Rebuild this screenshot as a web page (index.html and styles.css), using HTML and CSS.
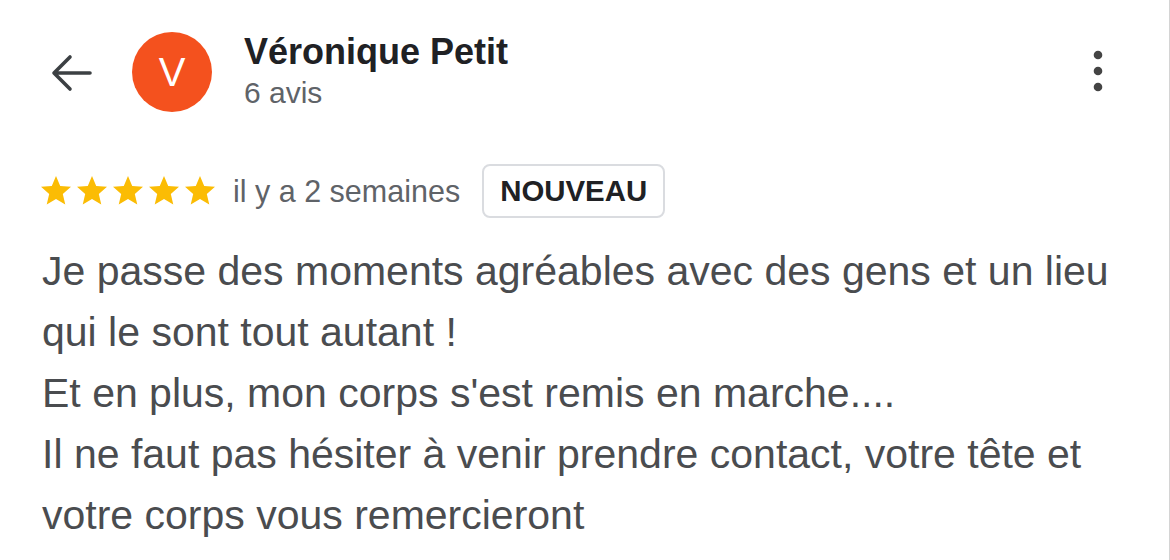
FILE: index.html
```html
<!DOCTYPE html>
<html lang="fr">
<head>
<meta charset="utf-8">
<link rel="stylesheet" href="styles.css">
</head>
<body>
<div class="page">
  <header class="header">
    <svg class="back" viewBox="0 0 42 40" width="42" height="40">
      <path d="M40 20H5M20 4L4 20l16 16" fill="none" stroke="#3c4043" stroke-width="3.6" stroke-linecap="round" stroke-linejoin="round"/>
    </svg>
    <div class="avatar">V</div>
    <div class="who">
      <div class="name">Véronique Petit</div>
      <div class="count">6 avis</div>
    </div>
    <svg class="kebab" viewBox="0 0 12 44" width="12" height="44">
      <circle cx="6" cy="6" r="4.3" fill="#444"/>
      <circle cx="6" cy="22" r="4.3" fill="#444"/>
      <circle cx="6" cy="38" r="4.3" fill="#444"/>
    </svg>
  </header>
  <div class="meta">
    <div class="stars">
      <svg viewBox="0 0 24 24" width="36" height="36"><path d="M12 17.27L18.18 21l-1.64-7.03L22 9.24l-7.19-.61L12 2 9.19 8.63 2 9.24l5.46 4.73L5.82 21z" fill="#fbbc04"/></svg>
      <svg viewBox="0 0 24 24" width="36" height="36"><path d="M12 17.27L18.18 21l-1.64-7.03L22 9.24l-7.19-.61L12 2 9.19 8.63 2 9.24l5.46 4.73L5.82 21z" fill="#fbbc04"/></svg>
      <svg viewBox="0 0 24 24" width="36" height="36"><path d="M12 17.27L18.18 21l-1.64-7.03L22 9.24l-7.19-.61L12 2 9.19 8.63 2 9.24l5.46 4.73L5.82 21z" fill="#fbbc04"/></svg>
      <svg viewBox="0 0 24 24" width="36" height="36"><path d="M12 17.27L18.18 21l-1.64-7.03L22 9.24l-7.19-.61L12 2 9.19 8.63 2 9.24l5.46 4.73L5.82 21z" fill="#fbbc04"/></svg>
      <svg viewBox="0 0 24 24" width="36" height="36"><path d="M12 17.27L18.18 21l-1.64-7.03L22 9.24l-7.19-.61L12 2 9.19 8.63 2 9.24l5.46 4.73L5.82 21z" fill="#fbbc04"/></svg>
    </div>
    <span class="time">il y a 2 semaines</span>
    <span class="badge">NOUVEAU</span>
  </div>
  <p class="review">Je passe des moments agréables avec des gens et un lieu<br>qui le sont tout autant !<br>Et en plus, mon corps s'est remis en marche....<br>Il ne faut pas hésiter à venir prendre contact, votre tête et<br>votre corps vous remercieront</p>
</div>
</body>
</html>
```

FILE: styles.css
```css
html, body {
  margin: 0;
  padding: 0;
  background: #ffffff;
}
.page {
  width: 1169px;
  height: 560px;
  border-right: 1px solid #d4d4d4;
  font-family: "Liberation Sans", Arial, sans-serif;
  overflow: hidden;
}
.header {
  display: flex;
  align-items: center;
  padding: 32px 0 0 50px;
  height: 80px;
}
.back {
  flex: none;
  margin-top: 2px;
}
.avatar {
  flex: none;
  width: 80px;
  height: 80px;
  margin-left: 40px;
  border-radius: 50%;
  background: #f4511e;
  color: #ffffff;
  font-size: 40px;
  line-height: 80px;
  text-align: center;
}
.who {
  margin-left: 32px;
  margin-top: -2px;
}
.name {
  font-size: 36px;
  font-weight: bold;
  line-height: 40px;
  color: #202124;
}
.count {
  margin-top: 3px;
  font-size: 30px;
  line-height: 36px;
  color: #5f6368;
}
.kebab {
  flex: none;
  margin-left: auto;
  margin-right: 65px;
  margin-top: -2px;
}
.meta {
  display: flex;
  align-items: center;
  margin-top: 52px;
  padding-left: 38px;
  height: 54px;
}
.stars {
  display: flex;
}
.stars svg {
  display: block;
}
.time {
  margin-left: 15px;
  font-size: 30.5px;
  color: #5f6368;
}
.badge {
  margin-left: 22px;
  height: 54px;
  box-sizing: border-box;
  display: flex;
  align-items: center;
  padding: 0 16px;
  border: 2px solid #dadce0;
  border-radius: 8px;
  font-size: 29.4px;
  font-weight: bold;
  color: #202124;
}
.review {
  margin: 23px 0 0 0;
  padding-left: 42px;
  font-size: 41px;
  line-height: 61px;
  color: #4a4c4f;
}
```
